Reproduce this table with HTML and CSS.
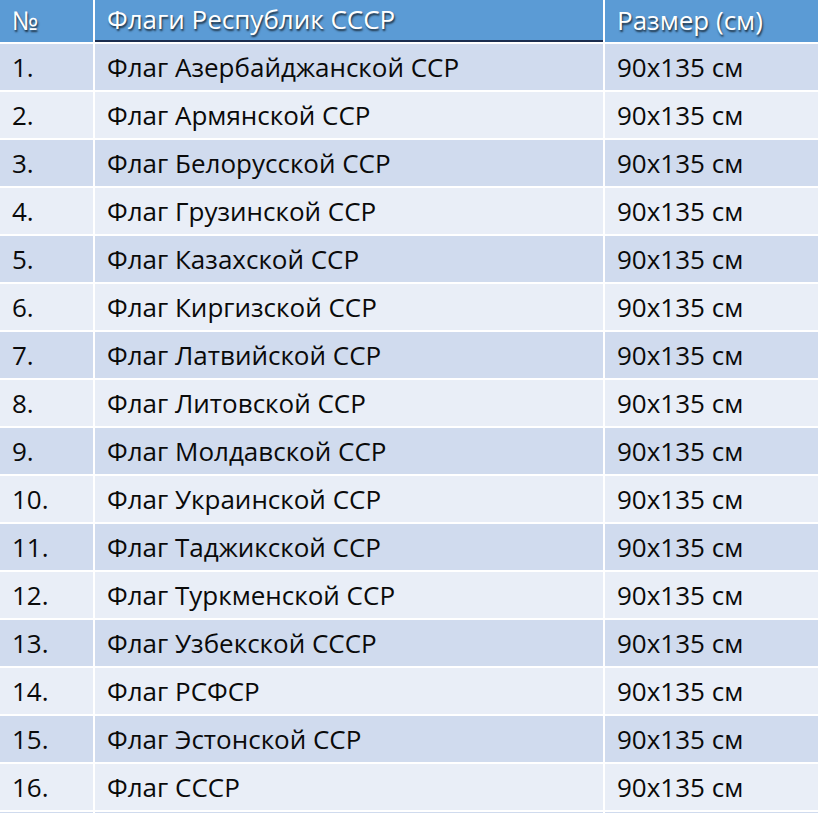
FILE: index.html
```html
<!DOCTYPE html>
<html lang="ru">
<head>
<meta charset="utf-8">
<link rel="stylesheet" href="styles.css">
</head>
<body>
<div class="table">
  <div class="cell head">№</div>
  <div class="cell head mid">Флаги Республик СССР</div>
  <div class="cell head">Размер (см)</div>

  <div class="cell odd">1.</div><div class="cell odd name">Флаг Азербайджанской ССР</div><div class="cell odd">90x135 см</div>
  <div class="cell even">2.</div><div class="cell even name">Флаг Армянской ССР</div><div class="cell even">90x135 см</div>
  <div class="cell odd">3.</div><div class="cell odd name">Флаг Белорусской ССР</div><div class="cell odd">90x135 см</div>
  <div class="cell even">4.</div><div class="cell even name">Флаг Грузинской ССР</div><div class="cell even">90x135 см</div>
  <div class="cell odd">5.</div><div class="cell odd name">Флаг Казахской ССР</div><div class="cell odd">90x135 см</div>
  <div class="cell even">6.</div><div class="cell even name">Флаг Киргизской ССР</div><div class="cell even">90x135 см</div>
  <div class="cell odd">7.</div><div class="cell odd name">Флаг Латвийской ССР</div><div class="cell odd">90x135 см</div>
  <div class="cell even">8.</div><div class="cell even name">Флаг Литовской ССР</div><div class="cell even">90x135 см</div>
  <div class="cell odd">9.</div><div class="cell odd name">Флаг Молдавской ССР</div><div class="cell odd">90x135 см</div>
  <div class="cell even">10.</div><div class="cell even name">Флаг Украинской ССР</div><div class="cell even">90x135 см</div>
  <div class="cell odd">11.</div><div class="cell odd name">Флаг Таджикской ССР</div><div class="cell odd">90x135 см</div>
  <div class="cell even">12.</div><div class="cell even name">Флаг Туркменской ССР</div><div class="cell even">90x135 см</div>
  <div class="cell odd">13.</div><div class="cell odd name">Флаг Узбекской СССР</div><div class="cell odd">90x135 см</div>
  <div class="cell even">14.</div><div class="cell even name">Флаг РСФСР</div><div class="cell even">90x135 см</div>
  <div class="cell odd">15.</div><div class="cell odd name">Флаг Эстонской ССР</div><div class="cell odd">90x135 см</div>
  <div class="cell even">16.</div><div class="cell even name">Флаг СССР</div><div class="cell even">90x135 см</div>
  <div class="cell odd"></div><div class="cell odd name"></div><div class="cell odd"></div>
</div>
</body>
</html>
```

FILE: styles.css
```css
html, body {
  margin: 0;
  padding: 0;
  background: #ffffff;
}
body {
  font-family: "Open Sans", "Noto Sans", sans-serif;
  overflow: hidden;
}
.table {
  display: grid;
  grid-template-columns: 93px 508px 1fr;
  grid-template-rows: 42px repeat(16, 46px) 1px;
  column-gap: 2px;
  row-gap: 2px;
  width: 818px;
  background: #ffffff;
}
.cell {
  display: flex;
  align-items: center;
  padding-left: 12px;
  font-size: 26px;
  color: #0a0a0a;
  white-space: nowrap;
  box-sizing: border-box;
  overflow: hidden;
}
.name {
  padding-left: 12px;
}
.head {
  background: #5b9bd5;
  color: #ffffff;
  font-size: 26px;
  text-shadow: 1px 2px 2px rgba(0, 0, 0, 0.7);
  padding-bottom: 2px;
}
.head.mid {
  border-bottom: 2px solid #1b2d4f;
}
.odd {
  background: #d0dbee;
}
.even {
  background: #e9eef7;
}
```
